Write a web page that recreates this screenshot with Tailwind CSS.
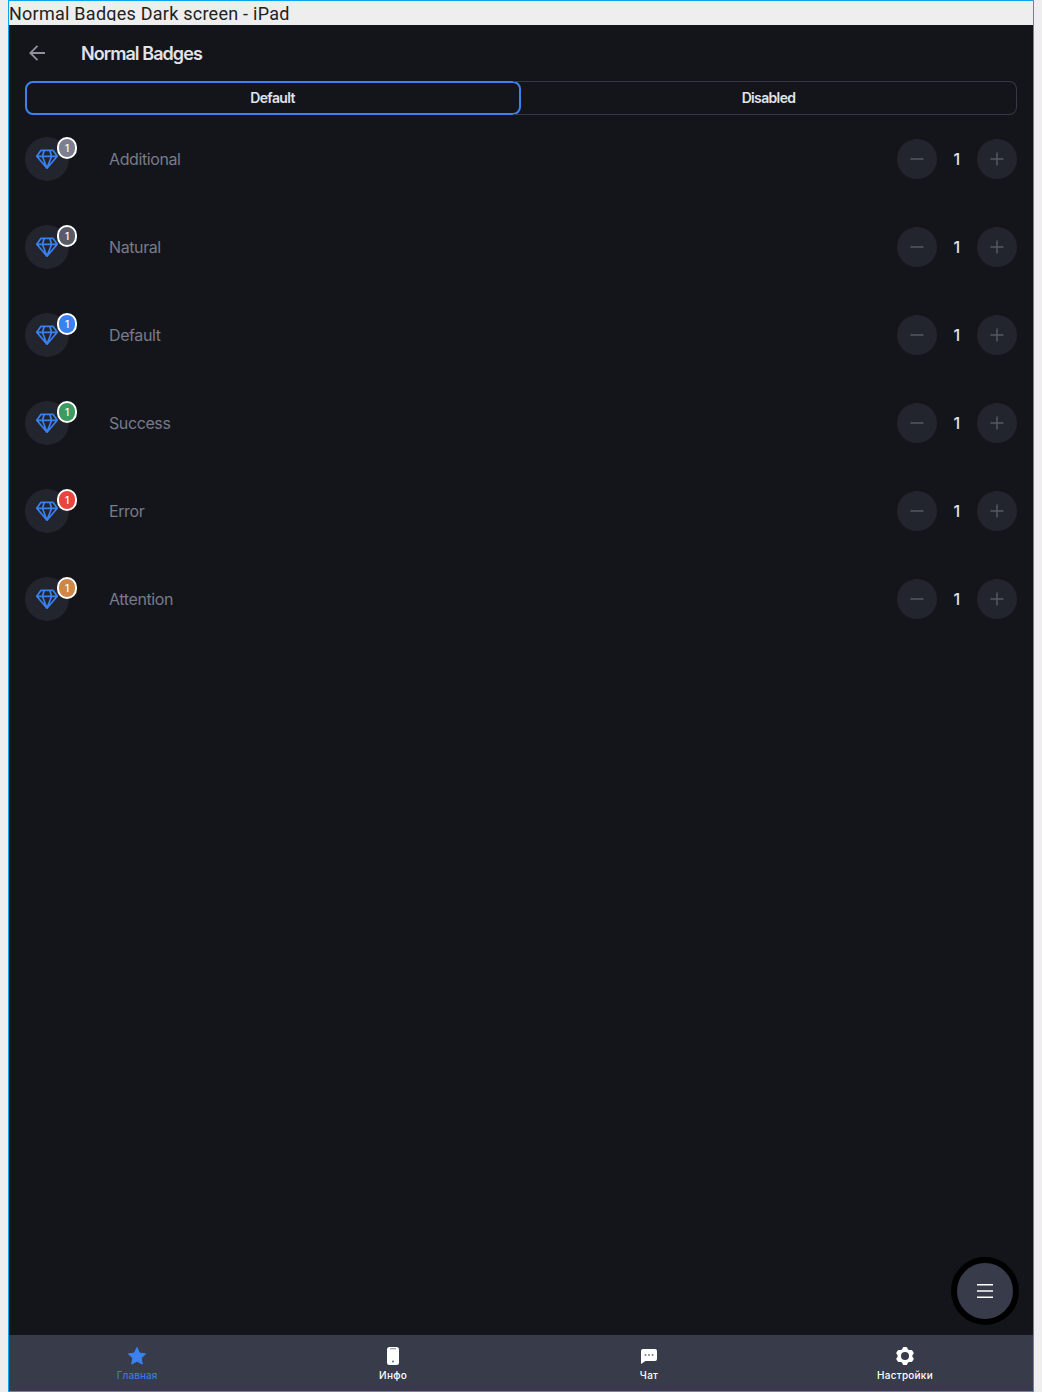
<!DOCTYPE html>
<html lang="en">
<head>
<meta charset="utf-8">
<title>Normal Badges</title>
<script src="https://cdn.jsdelivr.net/npm/@tailwindcss/browser@4"></script>
</head>
<body class="h-[1392px] overflow-hidden bg-[#eeeeee] pl-2 font-['Inter',sans-serif]">
<svg class="hidden">
  <symbol id="gem" viewBox="0 0 22 20"><path d="M5 1.300h12l4.200 6L11 19.200.8 7.300zM.8 7.300h20.400M8.300 1.300 6.400 7.300 11 19.200l4.600-11.900L13.700 1.300" fill="none" stroke="currentColor" stroke-width="1.700" stroke-linejoin="round"/></symbol>
</svg>
<div class="relative flex h-[1392px] w-[1026px] flex-col border border-[#0aa5ee]">
  <div class="h-6 shrink-0 bg-[#eeeeee]"><div class="h-5 overflow-hidden whitespace-nowrap font-['Roboto',sans-serif] text-[18px] leading-[25px] tracking-[0.25px] text-[#222]">Normal Badges Dark screen - iPad</div></div>
  <main class="flex flex-1 flex-col bg-[#14151a]">
    <header class="flex h-14 items-center pl-5">
      <svg class="size-4" viewBox="0 0 16 16" fill="none" stroke="#8e909c" stroke-width="1.800"><path d="M16 8H1.500M8.500 .8 1.300 8l7.200 7.200"/></svg>
      <h1 class="ml-9 pt-px text-[18px] font-semibold tracking-[-0.93px] text-[#e0e3ec]">Normal Badges</h1>
    </header>
    <div class="mx-4 grid h-[34px] grid-cols-2 rounded-lg text-[14px] font-semibold tracking-[-0.65px] text-[#e0e3ec]">
      <div class="flex items-center justify-center rounded-lg border-2 border-[#3b82f0] pr-px pb-0.5">Default</div>
      <div class="-ml-2 flex items-center justify-center rounded-r-lg border border-l-0 border-[#363846] pb-0.5 pl-2">Disabled</div>
    </div>
    <section id="rows" class="flex flex-col"></section>
  </main>
  <nav class="grid h-14 shrink-0 grid-cols-4 bg-[#383b4a] text-[10px] font-medium leading-3 tracking-[0.25px] text-white">
    <div class="flex flex-col items-center pt-[11px] font-normal text-[#3b82f0]">
      <svg class="-my-0.5 h-6 w-6" viewBox="0 0 24 24" fill="currentColor" stroke="currentColor" stroke-linejoin="round"><path d="m12 3.500 2.600 5.600 6 .8-4.400 4.200 1.100 6L12 17.200l-5.300 2.900 1.100-6-4.400-4.200 6-.8z"/></svg>
      <span class="mt-[3px] tracking-[0.1px]">Главная</span>
    </div>
    <div class="flex flex-col items-center pt-[11px]">
      <svg class="-my-0.5 h-6 w-6" viewBox="0 0 24 24"><rect x="6" y="3" width="12" height="18" rx="2.500" fill="#fff"/><path d="M9 4.700h6" stroke="#9a9ca5" stroke-width="1.200"/><circle cx="12" cy="17.500" r=".9" fill="#555866"/></svg>
      <span class="mt-[3px]">Инфо</span>
    </div>
    <div class="flex flex-col items-center pt-[11px]">
      <svg class="-my-0.5 h-6 w-6" viewBox="0 0 24 24"><path d="M6 5h12a2 2 0 0 1 2 2v8a2 2 0 0 1-2 2H8.500L4 20V7a2 2 0 0 1 2-2z" fill="#fff"/><path d="M7.700 11h1.500M11.250 11h1.500M14.800 11h1.500" stroke="#555866" stroke-width="1.500"/></svg>
      <span class="mt-[3px]">Чат</span>
    </div>
    <div class="flex flex-col items-center pt-[11px]">
      <svg class="-my-0.5 h-6 w-6" viewBox="0 0 24 24"><path d="M10.800 4h2.400l1 2.100 1.800 1 2.400-.2 1.300 2.200L18.400 11v2l1.300 1.900-1.300 2.200-2.400-.2-1.800 1-1 2.100h-2.400l-1-2.100-1.800-1-2.400.2-1.300-2.200L5.600 13v-2L4.300 9.100l1.300-2.200 2.400.2 1.800-1z" fill="#fff" stroke="#fff" stroke-width="2" stroke-linejoin="round"/><circle cx="12" cy="12" r="4" fill="#383b4a"/></svg>
      <span class="mt-[3px]">Настройки</span>
    </div>
  </nav>
  <button class="absolute top-[1256px] left-[942px] flex size-[68px] items-center justify-center rounded-full border-6 border-black bg-[#383b4a]">
    <svg class="h-4 w-4" viewBox="0 0 16 16" stroke="#fff" stroke-width="1.500"><path d="M0 1.750h16M0 8h16M0 14.250h16"/></svg>
  </button>
</div>
<script>
const kinds = [
  ['Additional', 'bg-[#7c7f8f]'],
  ['Natural', 'bg-[#585c69]'],
  ['Default', 'bg-[#3b82f0]'],
  ['Success', 'bg-[#3d9b62]'],
  ['Error', 'bg-[#e8453f]'],
  ['Attention', 'bg-[#cc8749]']
];
document.getElementById('rows').innerHTML = kinds.map(([name, color]) => `
  <div class="flex h-[88px] items-center px-4 text-[16px]">
    <div class="relative flex size-11 items-center justify-center rounded-full bg-[#22252e] text-[#3b82f0]">
      <svg class="h-5 w-[22px]"><use href="#gem"/></svg>
      <span class="absolute top-0 left-8 flex h-[22px] w-5 items-center justify-center rounded-[10px] border-2 border-white pt-px text-[10px] font-medium text-white ${color}">1</span>
    </div>
    <span class="ml-10 flex-1 tracking-[-0.4px] text-[#777b8b]">${name}</span>
    <div class="flex size-10 items-center justify-center rounded-full bg-[#22252e]"><svg class="size-[14px]" viewBox="0 0 14 14" stroke="#555865" stroke-width="1.500"><path d="M.5 7h13"/></svg></div>
    <span class="w-[39.6px] pr-px text-center font-medium text-[#e0e3ec]">1</span>
    <div class="flex size-10 items-center justify-center rounded-full bg-[#22252e]"><svg class="size-[14px]" viewBox="0 0 14 14" stroke="#555865" stroke-width="1.500"><path d="M.5 7h13M7 .5v13"/></svg></div>
  </div>`).join('');
</script>
</body>
</html>
